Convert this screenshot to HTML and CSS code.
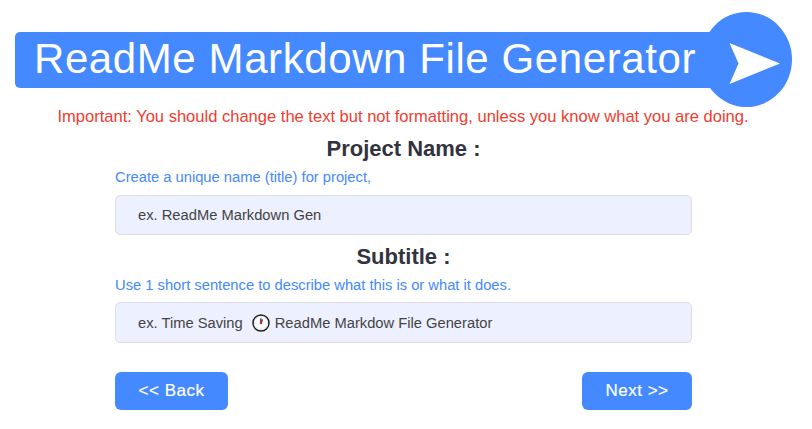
FILE: index.html
```html
<!DOCTYPE html>
<html lang="en">
<head>
<meta charset="utf-8">
<title>ReadMe Markdown File Generator</title>
<link rel="stylesheet" href="styles.css">
</head>
<body>
<header class="banner">
  <svg class="badge" viewBox="0 0 91 95" aria-hidden="true"><ellipse cx="45.5" cy="47.5" rx="45.5" ry="47.5" fill="#4489ff"/><path d="M28.5 31L79 51.5 28.5 72 37.5 51.5Z" fill="#fff"/></svg>
  <h1 class="title">ReadMe Markdown File Generator</h1>
</header>
<main>
  <p class="notice">Important: You should change the text but not formatting, unless you know what you are doing.</p>
  <form class="form">
    <section class="field">
      <h2 class="heading">Project Name :</h2>
      <p class="hint">Create a unique name (title) for project,</p>
      <div class="input">ex. ReadMe Markdown Gen</div>
    </section>
    <section class="field subtitle">
      <h2 class="heading">Subtitle :</h2>
      <p class="hint">Use 1 short sentence to describe what this is or what it does.</p>
      <div class="input"><span>ex. Time Saving</span><svg class="clock" viewBox="0 0 18 18" aria-hidden="true"><circle cx="9" cy="9" r="8" fill="#fff" stroke="#202020" stroke-width="1.5"/><path d="M9 2v1.5M9 14.5V16M2 9h1.5M14.5 9H16M4.2 4.2l.6.6M13.2 13.2l.6.6M4.2 13.8l.6-.6M13.2 4.8l.6-.6" stroke="#aaa" stroke-width=".7"/><path d="M8.2 4.5h1.4v5H8.2z" fill="#333"/><path d="M9 9.5L10.5 5.5" stroke="#333" stroke-width="1.2"/><circle cx="9" cy="8.9" r="1.3" fill="#e02030"/></svg><span>ReadMe Markdow File Generator</span></div>
    </section>
    <nav class="actions">
      <button type="button" class="button back">&lt;&lt; Back</button>
      <button type="button" class="button next">Next &gt;&gt;</button>
    </nav>
  </form>
</main>
</body>
</html>
```
FILE: styles.css
```css
* { box-sizing: border-box; }
body { margin: 0; padding-top: 32px; background: #fff; color: #444; font-family: "Liberation Sans", Arial, sans-serif; }
h1, h2, p { margin: 0; font-weight: 400; }
.banner { position: relative; width: 735px; height: 56px; margin-left: 15px; padding-left: 19px; background: #4489ff; border-radius: 5px; }
.title { position: relative; color: #fff; font-size: 42px; line-height: 54px; letter-spacing: .59px; white-space: nowrap; }
.badge { position: absolute; left: 686px; top: -20px; width: 91px; height: 95px; }
.notice { margin-top: 18px; padding-right: 6px; color: #f03c30; font-size: 16.55px; line-height: 21px; text-align: center; white-space: nowrap; }
.form { width: 577px; margin: 7px 0 0 115px; }
.field { height: 108px; }
.heading { color: #333340; font-size: 22px; font-weight: 700; line-height: 30px; text-align: center; }
.hint { height: 31px; color: #4489ff; font-size: 14.73px; line-height: 27px; }
.input { display: flex; align-items: center; height: 40px; padding-left: 22px; background: #ecf0ff; border: 1px solid #dedee0; border-radius: 5px; font-size: 14.73px; }
.subtitle .hint { height: 30px; }
.subtitle .input { height: 41px; }
.clock { width: 18px; height: 18px; margin: 0 5px 0 9px; }
.actions { display: flex; justify-content: space-between; margin-top: 22px; }
.button { height: 38px; padding: 0; border: 0; border-radius: 6px; background: #4489ff; color: #fff; font: 17px "Liberation Sans", Arial, sans-serif; letter-spacing: .5px; -webkit-text-stroke: .2px #fff; }
.back { width: 113px; }
.next { width: 110px; }
```
